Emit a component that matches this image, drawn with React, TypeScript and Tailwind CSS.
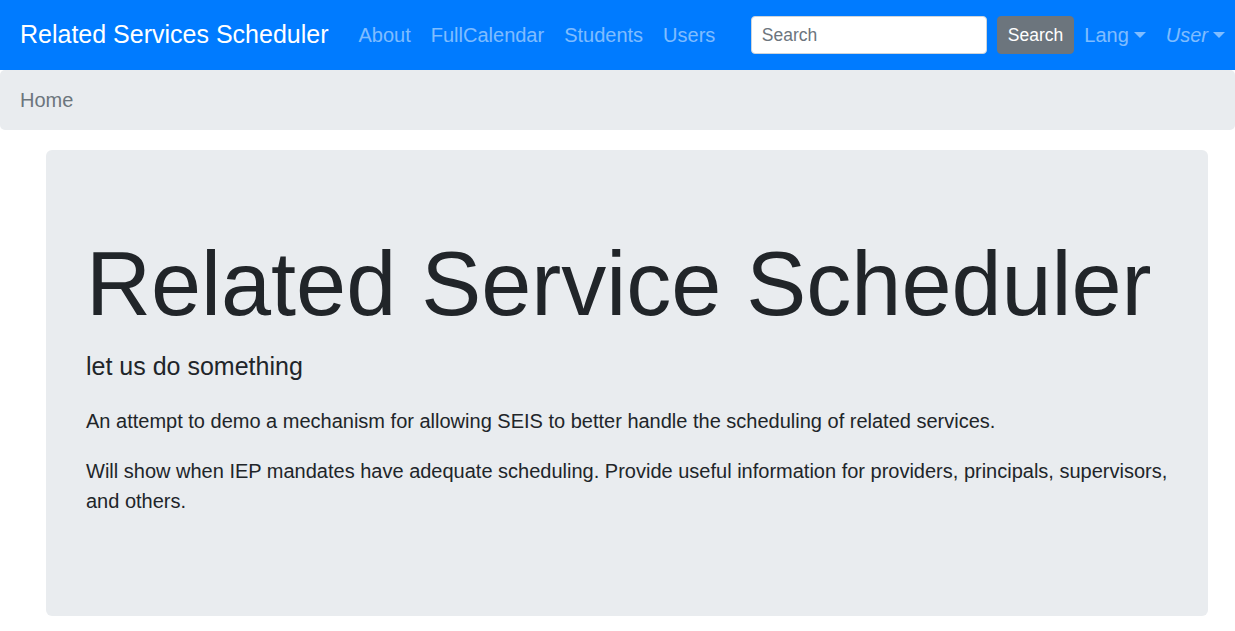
const font = { fontFamily: '"Liberation Sans", Arial, sans-serif' }

function Caret() {
  return (
    <span className="ml-[5px] inline-block h-0 w-0 border-x-[6px] border-t-[6px] border-x-transparent border-t-current align-[4px]" />
  )
}

function Navbar() {
  const links = ['About', 'FullCalendar', 'Students', 'Users']
  return (
    <nav className="flex h-[70px] items-center bg-[#007bff] pl-5 text-[20px] leading-[30px]">
      <a href="#" className="mr-5 py-[6px] text-[25px] leading-[37.5px] text-white">
        Related Services Scheduler
      </a>
      <ul className="flex">
        {links.map((link) => (
          <li key={link}>
            <a href="#" className="block px-[10px] py-[10px] text-white/50">
              {link}
            </a>
          </li>
        ))}
      </ul>
      <div className="ml-auto flex items-center">
        <form className="flex items-center" onSubmit={(e) => e.preventDefault()}>
          <input
            type="search"
            placeholder="Search"
            className="mr-[10px] h-[38px] w-[236px] rounded-[4px] border border-[#ced4da] bg-white px-[10px] text-[17.5px] text-[#495057] placeholder:text-[#6c757d] focus:outline-none"
          />
          <button
            type="submit"
            className="h-[38px] rounded-[4px] border border-[#6c757d] bg-[#6c757d] px-[10px] text-[17.5px] text-white"
          >
            Search
          </button>
        </form>
        <a href="#" className="flex items-center px-[10px] py-[10px] text-white/50">
          Lang
          <Caret />
        </a>
        <a href="#" className="flex items-center px-[10px] py-[10px] italic text-white/50">
          User
          <Caret />
        </a>
      </div>
    </nav>
  )
}

export default function App() {
  return (
    <div style={font} className="min-h-screen bg-white text-[20px] leading-[30px] text-[#212529]">
      <Navbar />
      <ol className="mb-5 flex rounded-[5px] bg-[#e9ecef] px-5 py-[15px]">
        <li className="text-[#6c757d]">Home</li>
      </ol>
      <main className="ml-[46px] w-[1162px]">
        <section className="rounded-[6px] bg-[#e9ecef] px-10 py-20">
          <h1 className="mb-[10px] text-[90px] leading-[108px] font-light">Related Service Scheduler</h1>
          <p className="mb-5 text-[25px] leading-[37.5px]">let us do something</p>
          <p className="mb-5">
            An attempt to demo a mechanism for allowing SEIS to better handle the scheduling of related services.
          </p>
          <p className="mb-5">
            Will show when IEP mandates have adequate scheduling. Provide useful information for providers,
            principals, supervisors, and others.
          </p>
        </section>
      </main>
    </div>
  )
}
